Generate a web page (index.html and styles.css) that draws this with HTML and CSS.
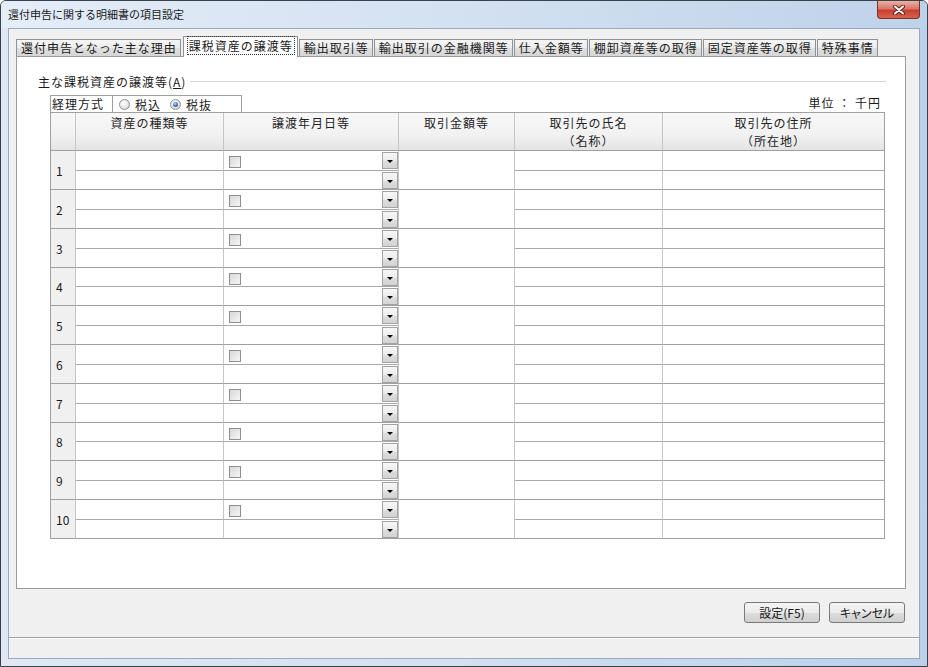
FILE: index.html
```html
<!DOCTYPE html>
<html lang="ja">
<head>
    <meta charset="UTF-8">
    <title>還付申告に関する明細書の項目設定</title>
    <link rel="stylesheet" href="styles.css">
</head>
<body>
    <div class="window">
        <div class="titlebar">
            <span class="title">還付申告に関する明細書の項目設定</span>
            <div class="close">
                <svg width="14" height="10" viewBox="0 0 14 10">
                    <path d="M3 1.5 L11 8.5 M11 1.5 L3 8.5" stroke="#6b2118" stroke-width="4" stroke-linecap="round"/>
                    <path d="M3 1.5 L11 8.5 M11 1.5 L3 8.5" stroke="#fff" stroke-width="2" stroke-linecap="round"/>
                </svg>
            </div>
        </div>

        <div class="client">
            <div class="tabs">
                <div class="tab">還付申告となった主な理由</div>
                <div class="tab active"><span class="focus">課税資産の譲渡等</span></div>
                <div class="tab">輸出取引等</div>
                <div class="tab">輸出取引の金融機関等</div>
                <div class="tab">仕入金額等</div>
                <div class="tab">棚卸資産等の取得</div>
                <div class="tab">固定資産等の取得</div>
                <div class="tab">特殊事情</div>
            </div>

            <div class="panel">
                <div class="group-head">
                    <span class="group-label">主な課税資産の譲渡等(<u>A</u>)</span>
                    <span class="rule"></span>
                </div>

                <div class="toolbar">
                    <div class="method">
                        <span class="method-label">経理方式</span>
                        <span class="radio"></span><span class="radio-text">税込</span>
                        <span class="radio on"></span><span class="radio-text">税抜</span>
                    </div>
                    <div class="unit">単位 ： 千円</div>
                </div>

                <table class="grid">
                    <colgroup>
                        <col class="c-num">
                        <col class="c-kind">
                        <col class="c-date">
                        <col class="c-amount">
                        <col class="c-name">
                        <col class="c-addr">
                    </colgroup>
                    <thead>
                        <tr>
                            <th></th>
                            <th>資産の種類等</th>
                            <th>譲渡年月日等</th>
                            <th>取引金額等</th>
                            <th>取引先の氏名<br>（名称）</th>
                            <th>取引先の住所<br>（所在地）</th>
                        </tr>
                    </thead>
                    <tbody id="rows"></tbody>
                </table>
            </div>

            <div class="actions">
                <div class="btn">設定(F5)</div>
                <div class="btn">キャンセル</div>
            </div>
            <div class="status"></div>
        </div>
    </div>

    <script>
        // 10 entry rows, each split into two sub-rows
        const rowsEl = document.getElementById('rows');
        let html = '';
        for (let i = 1; i <= 10; i++) {
            const cls = (i === 4 || i === 8) ? ' short' : '';
            html += `
                <tr class="top${cls}">
                    <td class="num" rowspan="2">${i}</td>
                    <td class="sub"></td>
                    <td class="sub"><div class="date-in"><span class="chk"></span><span class="dd"></span></div></td>
                    <td class="amount" rowspan="2"></td>
                    <td class="sub"></td>
                    <td class="sub"></td>
                </tr>
                <tr class="bot">
                    <td></td>
                    <td><div class="date-in"><span class="dd"></span></div></td>
                    <td></td>
                    <td></td>
                </tr>`;
        }
        rowsEl.innerHTML = html;
    </script>
</body>
</html>
```

FILE: styles.css
```css
body {
    margin: 0;
    width: 928px;
    height: 667px;
    overflow: hidden;
    font-family: "Noto Sans CJK JP", sans-serif;
    font-size: 12px;
    color: #1a1a1a;
    background: #fff;
}

.window {
    height: 667px;
    box-sizing: border-box;
    border: 1px solid #39414b;
    border-radius: 6px 6px 0 0;
    background: linear-gradient(90deg, #dfe8f4 0%, #d2e0f0 50%, #bcd0e9 100%);
    display: flex;
    flex-direction: column;
}

.titlebar {
    height: 27px;
    display: flex;
    align-items: flex-start;
    justify-content: space-between;
    background: linear-gradient(90deg, #e4edf8 0%, #d5e2f2 45%, #bed2ea 100%);
    border-radius: 5px 5px 0 0;
}

.title {
    font-size: 11px;
    line-height: 14px;
    margin: 6px 0 0 7px;
}

.close {
    width: 43px;
    height: 18px;
    margin-right: 7px;
    box-sizing: border-box;
    border: 1px solid #7c3027;
    border-top: none;
    border-radius: 0 0 4px 4px;
    background: linear-gradient(#eab1a6 0%, #d9776a 45%, #c7402f 55%, #d8624c 100%);
    display: flex;
    align-items: center;
    justify-content: center;
}

.client {
    flex: 1;
    margin: 0 7px 7px 7px;
    border: 1px solid #98aac0;
    background: #f0f0f0;
    display: flex;
    flex-direction: column;
}

/* tabs */
.tabs {
    display: flex;
    align-items: flex-end;
    height: 20px;
    margin: 7px 0 0 7px;
    position: relative;
    z-index: 1;
}

.tab {
    height: 17px;
    box-sizing: border-box;
    padding: 0 3px 0 4px;
    margin-right: 1px;
    border: 1px solid #8d9096;
    border-bottom: none;
    background: linear-gradient(#f5f5f5, #ececec 50%, #e0e0e0 51%, #d6d6d6);
    line-height: 16px;
    letter-spacing: 1px;
    white-space: nowrap;
}

.tab.active {
    height: 21px;
    margin: 0 1px -1px 1px;
    padding: 2px 3px 0 4px;
    background: #fff;
    line-height: 14px;
}

.focus {
    outline: 1px dotted #333;
    outline-offset: 0;
    padding: 0 1px;
}

/* tab page */
.panel {
    height: 533px;
    width: 890px;
    box-sizing: border-box;
    margin-left: 7px;
    border: 1px solid #989a9e;
    background: #fff;
}

.group-head {
    display: flex;
    align-items: center;
    margin: 18px 19px 0 21px;
    height: 14px;
}

.group-label {
    letter-spacing: 1px;
    line-height: 14px;
}

.group-label u {
    text-underline-offset: 1px;
}

.rule {
    flex: 1;
    margin-left: 4px;
    border-top: 1px solid #d5d9dd;
    border-bottom: 1px solid #fff;
}

.toolbar {
    display: flex;
    justify-content: space-between;
    align-items: flex-end;
    width: 835px;
    height: 17px;
    margin: 6px 0 0 33px;
}

.method {
    display: flex;
    align-items: center;
    width: 192px;
    height: 17px;
    box-sizing: border-box;
    border: 1px solid #a0a0a0;
    border-bottom: none;
    letter-spacing: 1px;
}

.method-label {
    width: 62px;
    height: 100%;
    box-sizing: border-box;
    padding-left: 1px;
    border-right: 1px solid #a0a0a0;
    line-height: 16px;
}

.radio {
    width: 11px;
    height: 11px;
    box-sizing: border-box;
    border-radius: 50%;
    border: 1px solid #8f8f8f;
    background: radial-gradient(circle at 40% 35%, #fff 0%, #e6e6e6 55%, #c9c9c9 100%);
    margin-left: 6px;
    position: relative;
}

.radio + .radio-text {
    margin-left: 5px;
}

.radio-text + .radio {
    margin-left: 9px;
}

.radio.on::after {
    content: "";
    position: absolute;
    left: 2px;
    top: 2px;
    width: 5px;
    height: 5px;
    border-radius: 50%;
    background: radial-gradient(circle at 40% 35%, #b9dcff 0%, #3a78d0 50%, #163f8c 100%);
}

.unit {
    letter-spacing: 1px;
    line-height: 16px;
    padding-right: 4px;
    margin-bottom: 1px;
}

/* grid */
.grid {
    margin-left: 33px;
    border-collapse: separate;
    border-spacing: 0;
    table-layout: fixed;
    width: 835px;
    border-top: 1px solid #a0a0a0;
    border-left: 1px solid #a0a0a0;
}

.c-num { width: 25px; }
.c-kind { width: 148px; }
.c-date { width: 175px; }
.c-amount { width: 116px; }
.c-name { width: 148px; }
.c-addr { width: 222px; }

.grid thead tr {
    height: 38px;
}

.grid th {
    padding: 1px 0 0;
    vertical-align: top;
    font-weight: normal;
    line-height: 18px;
    letter-spacing: 1px;
    color: #222;
    border-right: 1px solid #c6c6c6;
    border-bottom: 1px solid #a0a0a0;
    background: linear-gradient(#f8f8f8 0%, #f1f1f1 60%, #e4e4e4 100%);
}

.grid td {
    padding: 0;
    vertical-align: top;
    border-right: 1px solid #c6c6c6;
    border-bottom: 1px solid #a0a0a0;
}

.grid th:last-child,
.grid td:last-child {
    border-right-color: #a0a0a0;
}

.grid tr.top { height: 20px; }
.grid tr.top.short { height: 19px; }
.grid tr.bot { height: 19px; }

.grid tr.top td.sub {
    border-bottom-color: #a9a9a9;
}

.grid td.num {
    background: #f0f0f0;
    vertical-align: middle;
    padding-left: 5px;
    font-size: 12px;
}

.date-in {
    display: flex;
    align-items: flex-start;
}

.chk {
    width: 12px;
    height: 12px;
    box-sizing: border-box;
    margin: 5px 0 0 5px;
    border: 1px solid #8e8f8f;
    background: linear-gradient(135deg, #d8d8d8, #f6f6f6);
}

.dd {
    width: 16px;
    height: 17px;
    box-sizing: border-box;
    margin: 1px 0 0 auto;
    border: 1px solid #a3a3a3;
    background: linear-gradient(#f7f7f7, #ececec 50%, #dedede 51%, #d3d3d3);
    display: flex;
    align-items: center;
    justify-content: center;
}

.dd::after {
    content: "";
    border-left: 3px solid transparent;
    border-right: 3px solid transparent;
    border-top: 3px solid #000;
    margin-top: 1px;
}

/* footer */
.actions {
    display: flex;
    justify-content: flex-end;
    gap: 9px;
    margin: 13px 14px 0 0;
}

.btn {
    width: 76px;
    height: 21px;
    box-sizing: border-box;
    border: 1px solid #7a7a7a;
    border-radius: 3px;
    background: linear-gradient(#f4f4f4, #ebebeb 50%, #dddddd 51%, #d0d0d0);
    text-align: center;
    line-height: 19px;
    font-size: 12px;
    font-feature-settings: "palt";
}

.status {
    flex: 1;
    margin-top: 14px;
    border-top: 1px solid #a0a0a0;
    box-shadow: inset 0 1px 0 #fff;
}
```
